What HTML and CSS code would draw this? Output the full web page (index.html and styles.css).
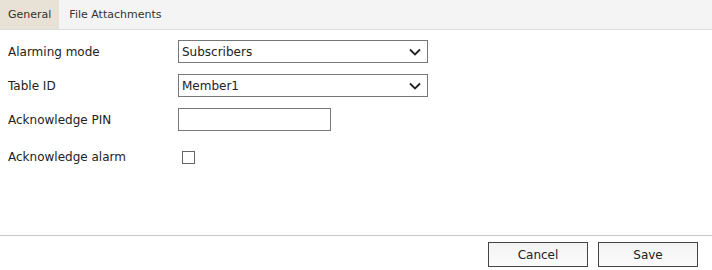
FILE: index.html
```html
<!DOCTYPE html>
<html>
<head>
<meta charset="utf-8">
<link rel="stylesheet" href="styles.css">
</head>
<body>
<div class="dialog">
  <div class="tabs">
    <div class="tab active">General</div>
    <div class="tab">File Attachments</div>
  </div>
  <div class="form">
    <div class="row">
      <label class="label">Alarming mode</label>
      <div class="select"><span>Subscribers</span>
        <svg class="chev" width="12" height="8" viewBox="0 0 12 8"><path d="M1 1.5 L6 6.5 L11 1.5" fill="none" stroke="#222" stroke-width="1.8"/></svg>
      </div>
    </div>
    <div class="row">
      <label class="label">Table ID</label>
      <div class="select"><span>Member1</span>
        <svg class="chev" width="12" height="8" viewBox="0 0 12 8"><path d="M1 1.5 L6 6.5 L11 1.5" fill="none" stroke="#222" stroke-width="1.8"/></svg>
      </div>
    </div>
    <div class="row">
      <label class="label">Acknowledge PIN</label>
      <div class="input"></div>
    </div>
    <div class="row row-check">
      <label class="label">Acknowledge alarm</label>
      <div class="check"></div>
    </div>
  </div>
  <div class="footer">
    <button class="btn">Cancel</button>
    <button class="btn">Save</button>
  </div>
</div>
</body>
</html>
```
FILE: styles.css
```css
* { box-sizing: border-box; }
html, body { margin: 0; padding: 0; background: #fff; }
body {
  font-family: "DejaVu Sans", Verdana, sans-serif;
  font-size: 12px;
  color: #222;
}
.dialog {
  width: 712px;
  height: 270px;
  display: flex;
  flex-direction: column;
}
.tabs {
  display: flex;
  height: 30px;
  background: #f4f4f4;
  border-bottom: 1px solid #dcdcdc;
  font-size: 11px;
}
.tab {
  padding: 0 10px;
  line-height: 29px;
  color: #333;
}
.tab.active {
  background: #e8e1d5;
  padding: 0 8px;
}
.form {
  flex: 1;
  padding: 10px 0 0 8px;
}
.row {
  display: flex;
  align-items: center;
  height: 23px;
  margin-bottom: 11px;
}
.row-check {
  margin-top: 19px;
  height: 14px;
}
.label {
  width: 170px;
  color: #222;
}
.select {
  width: 250px;
  height: 23px;
  border: 1px solid #777;
  display: flex;
  align-items: center;
  justify-content: space-between;
  padding: 0 4px 0 3px;
  background: #fff;
}
.chev { margin-right: 2px; }
.input {
  width: 153px;
  height: 23px;
  border: 1px solid #777;
  background: #fff;
}
.check {
  width: 13px;
  height: 13px;
  border: 1px solid #666;
  margin-left: 4px;
  background: #fff;
}
.footer {
  border-top: 1px solid #c8c8c8;
  height: 35px;
  display: flex;
  justify-content: flex-end;
  align-items: flex-start;
  padding: 6px 14px 0 0;
  gap: 10px;
}
.btn {
  width: 100px;
  height: 25px;
  border: 1px solid #444;
  background: linear-gradient(#f3f3f3, #fbfbfb);
  font-family: "DejaVu Sans", Verdana, sans-serif;
  font-size: 12px;
  color: #222;
  padding: 0;
}
```
